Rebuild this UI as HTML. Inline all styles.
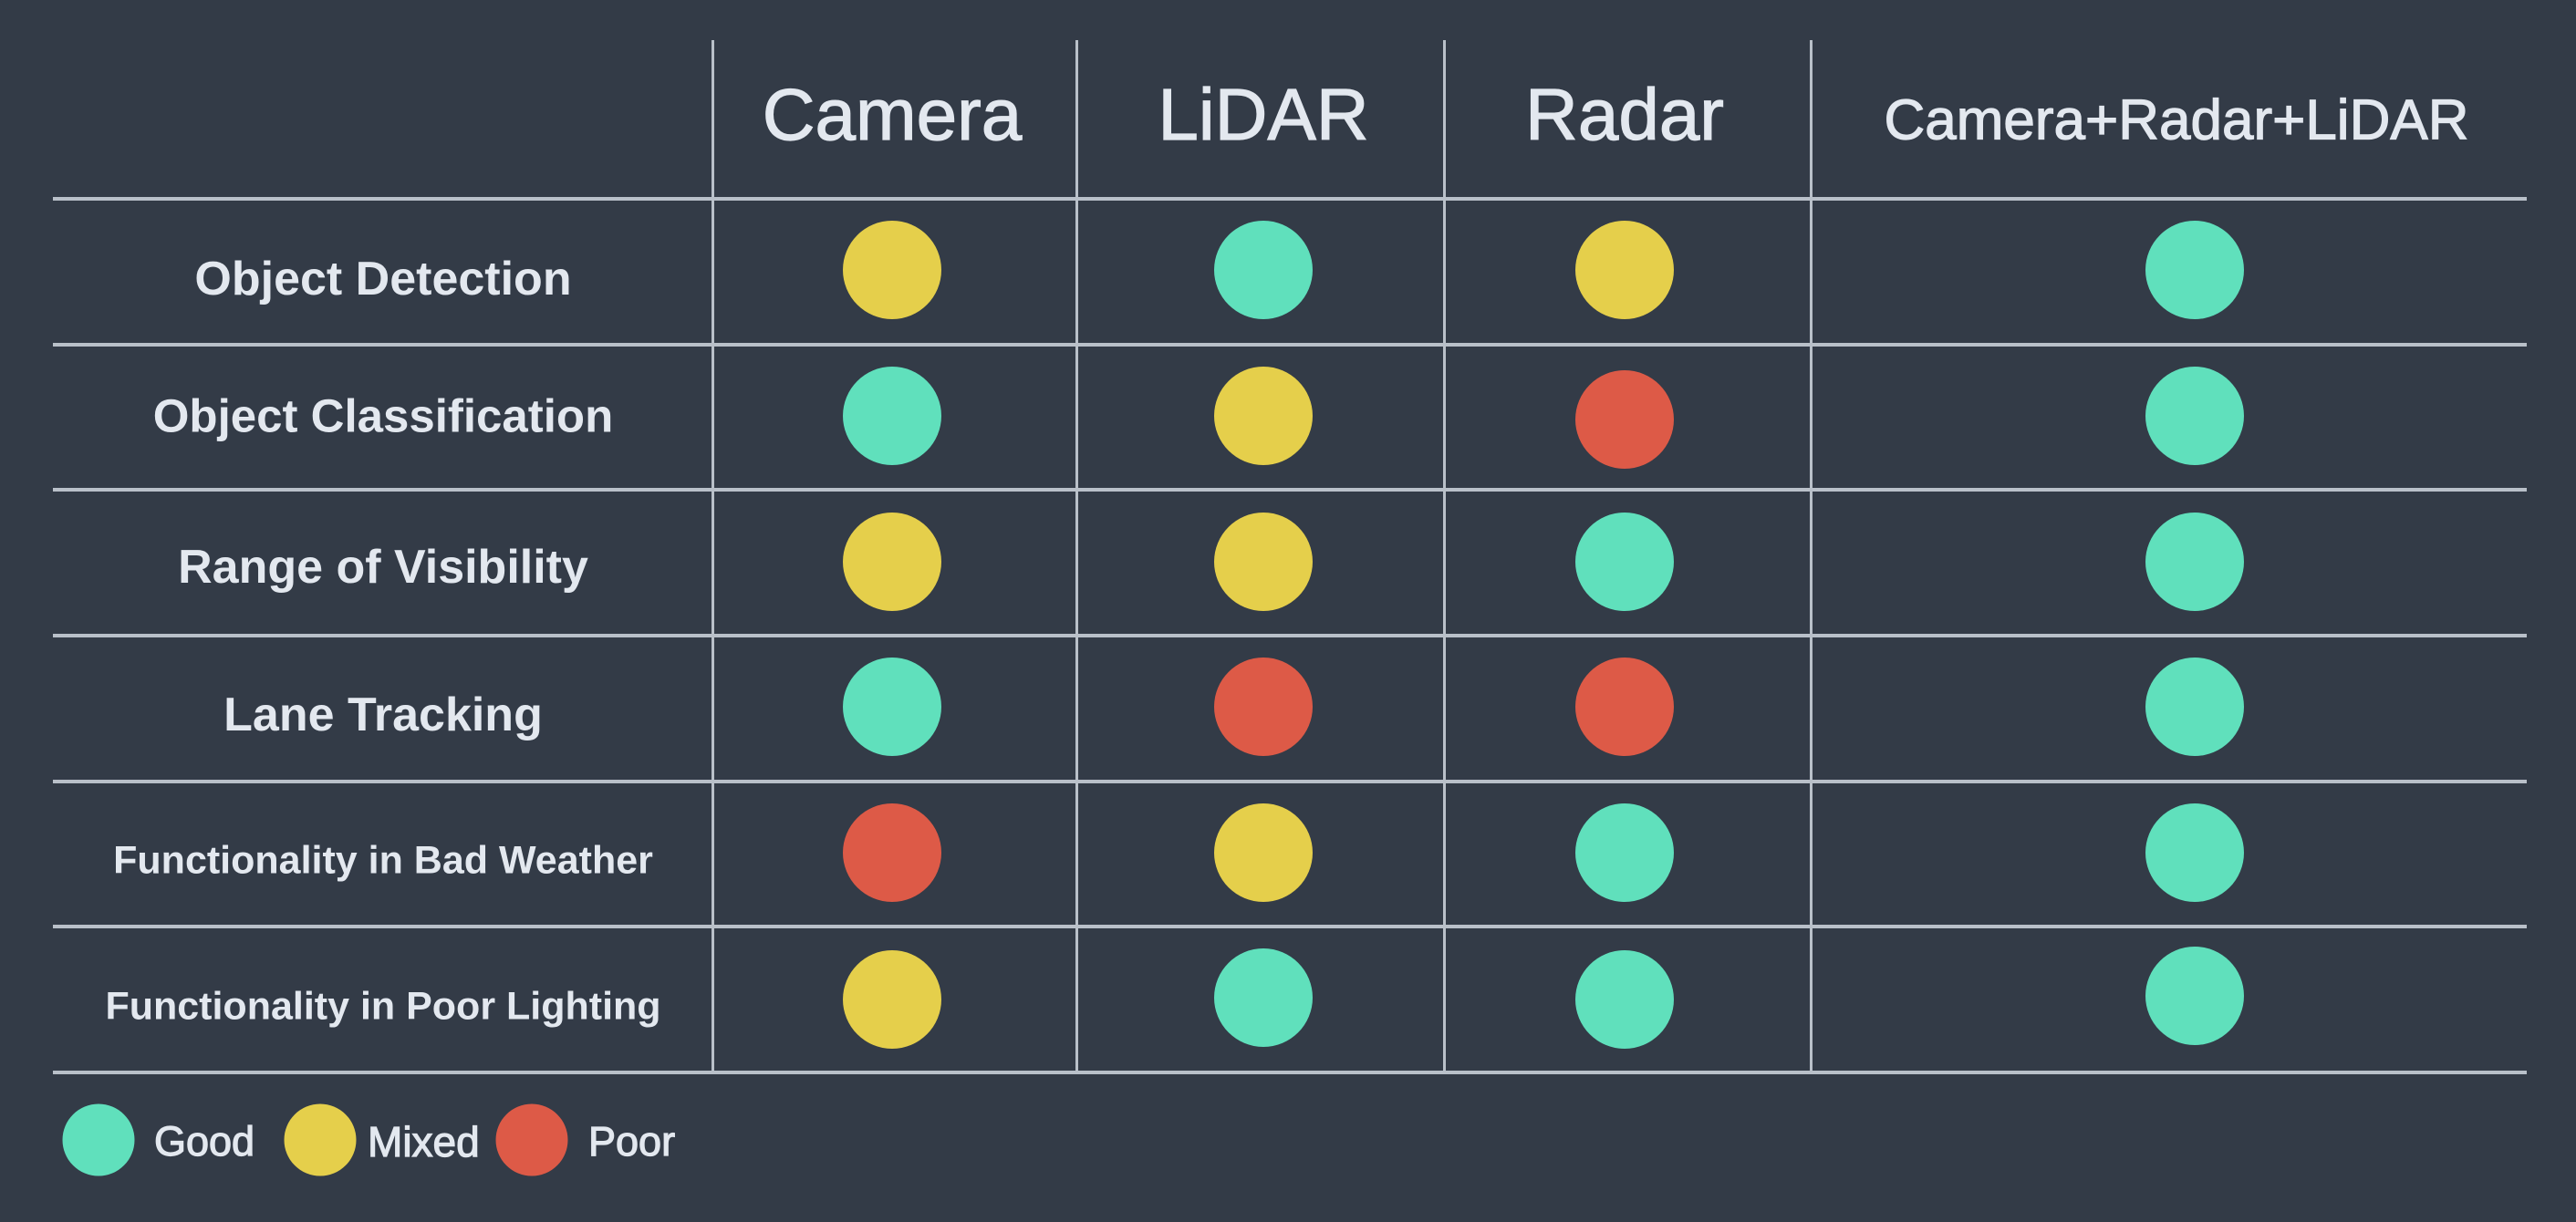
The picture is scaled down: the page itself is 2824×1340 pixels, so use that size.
<!DOCTYPE html>
<html><head><meta charset="utf-8"><style>
body{margin:0;width:2824px;height:1340px;background:#333b47;position:relative;overflow:hidden;font-family:"Liberation Sans","DejaVu Sans",sans-serif;color:#e3e8ef}
.v{position:absolute;top:44px;height:1134px;width:3px;background:#b9c0c9}
.h{position:absolute;left:58px;width:2712px;height:4px;background:#b9c0c9}
.t{position:absolute;transform:translate(-50%,-50%);white-space:nowrap;-webkit-text-stroke:1.2px #e3e8ef}
.b{font-weight:bold;-webkit-text-stroke:0}
.c{position:absolute;width:108px;height:108px;border-radius:50%;transform:translate(-50%,-50%)}
.g{background:#60e0bc}.y{background:#e5cf4b}.r{background:#dd5a47}
.l{position:absolute;width:79px;height:79px;border-radius:50%;transform:translate(-50%,-50%);top:1250px}
</style></head><body>
<div class="v" style="left:780px"></div><div class="v" style="left:1179px"></div><div class="v" style="left:1582px"></div><div class="v" style="left:1984px"></div>
<div class="h" style="top:216px"></div><div class="h" style="top:376px"></div><div class="h" style="top:535px"></div><div class="h" style="top:695px"></div><div class="h" style="top:855px"></div><div class="h" style="top:1014px"></div><div class="h" style="top:1174px"></div>
<div class="t" style="left:978px;top:126px;font-size:80px">Camera</div>
<div class="t" style="left:1385px;top:126px;font-size:80px">LiDAR</div>
<div class="t" style="left:1781px;top:126px;font-size:80px">Radar</div>
<div class="t" style="left:2386px;top:132px;font-size:62px">Camera+Radar+LiDAR</div>
<div class="t b" style="left:420px;top:306px;font-size:52px">Object Detection</div>
<div class="t b" style="left:420px;top:456px;font-size:51px">Object Classification</div>
<div class="t b" style="left:420px;top:622px;font-size:52px">Range of Visibility</div>
<div class="t b" style="left:420px;top:784px;font-size:52px">Lane Tracking</div>
<div class="t b" style="left:420px;top:944px;font-size:43px">Functionality in Bad Weather</div>
<div class="t b" style="left:420px;top:1104px;font-size:43px">Functionality in Poor Lighting</div>
<div class="c y" style="left:978px;top:296px"></div><div class="c g" style="left:1385px;top:296px"></div><div class="c y" style="left:1781px;top:296px"></div><div class="c g" style="left:2406px;top:296px"></div>
<div class="c g" style="left:978px;top:456px"></div><div class="c y" style="left:1385px;top:456px"></div><div class="c r" style="left:1781px;top:460px"></div><div class="c g" style="left:2406px;top:456px"></div>
<div class="c y" style="left:978px;top:616px"></div><div class="c y" style="left:1385px;top:616px"></div><div class="c g" style="left:1781px;top:616px"></div><div class="c g" style="left:2406px;top:616px"></div>
<div class="c g" style="left:978px;top:775px"></div><div class="c r" style="left:1385px;top:775px"></div><div class="c r" style="left:1781px;top:775px"></div><div class="c g" style="left:2406px;top:775px"></div>
<div class="c r" style="left:978px;top:935px"></div><div class="c y" style="left:1385px;top:935px"></div><div class="c g" style="left:1781px;top:935px"></div><div class="c g" style="left:2406px;top:935px"></div>
<div class="c y" style="left:978px;top:1096px"></div><div class="c g" style="left:1385px;top:1094px"></div><div class="c g" style="left:1781px;top:1096px"></div><div class="c g" style="left:2406px;top:1092px"></div>
<div class="l g" style="left:108px"></div><div class="l y" style="left:351px"></div><div class="l r" style="left:583px"></div>
<div class="t" style="left:169px;top:1252px;font-size:45px;transform:translateY(-50%)">Good</div>
<div class="t" style="left:403px;top:1252px;font-size:46px;transform:translateY(-50%)">Mixed</div>
<div class="t" style="left:645px;top:1252px;font-size:45px;transform:translateY(-50%)">Poor</div>
</body></html>
